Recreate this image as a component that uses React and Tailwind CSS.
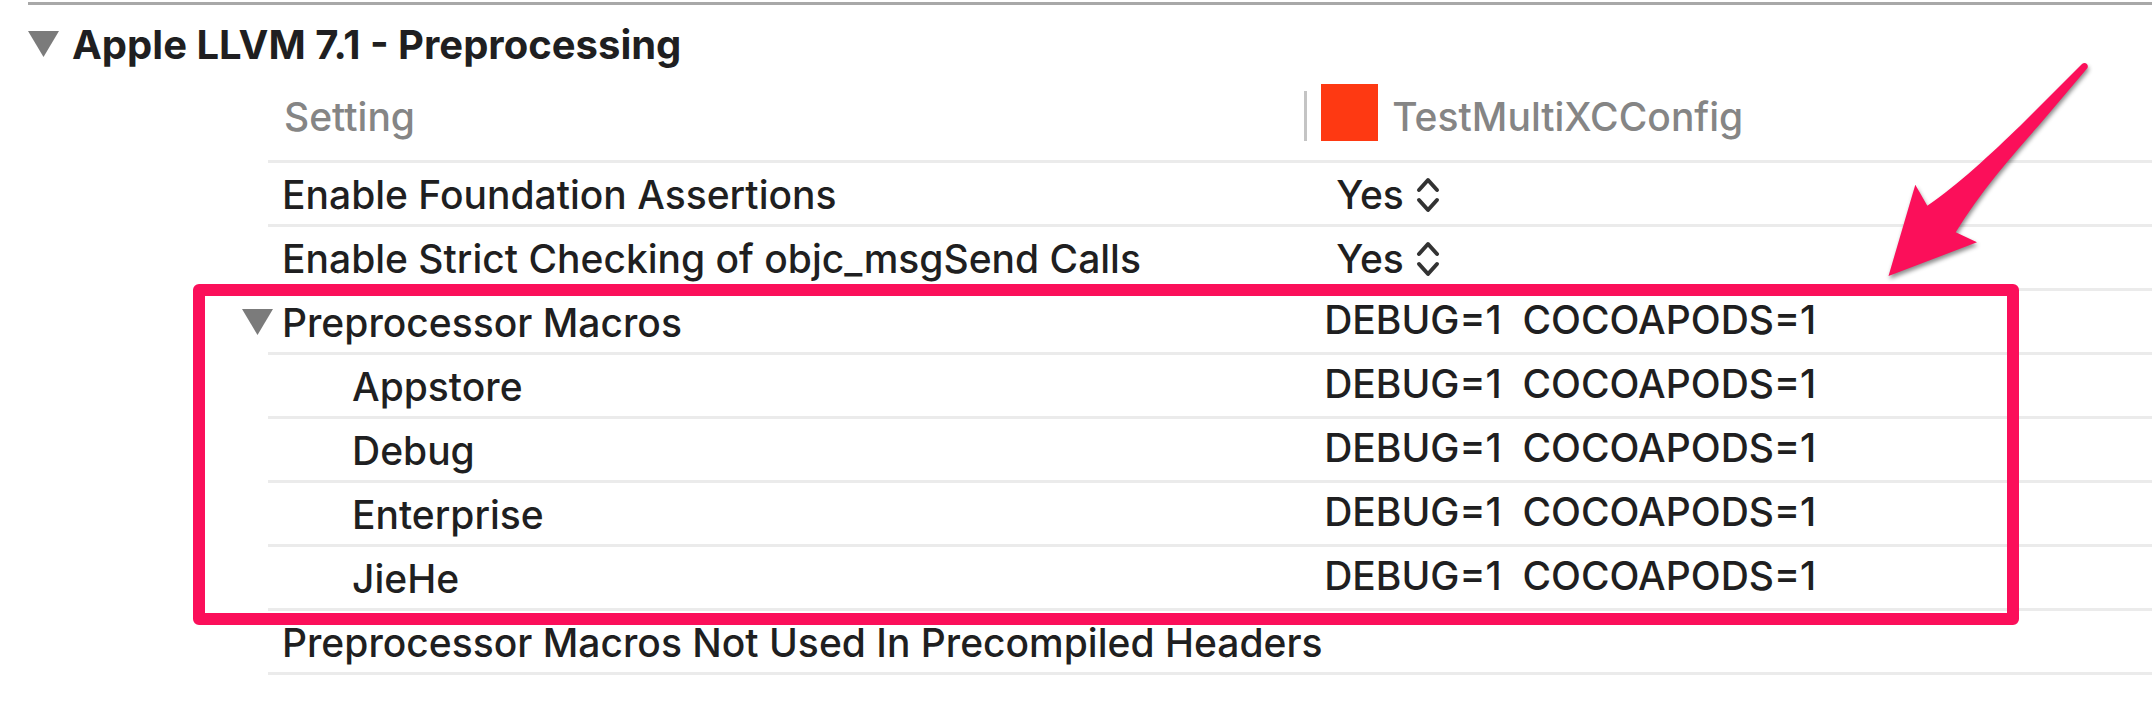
import { useState } from 'react'

const MACROS = 'DEBUG=1  COCOAPODS=1'

const configurations = ['Appstore', 'Debug', 'Enterprise', 'JieHe']

function Disclosure({ open, onClick, label }) {
  return (
    <button
      type="button"
      onClick={onClick}
      aria-expanded={open}
      aria-label={label}
      className="h-7 w-8 shrink-0 text-[#7b7b7b]"
    >
      <svg viewBox="0 0 32 28" fill="currentColor" className={open ? 'h-7 w-8' : 'h-7 w-8 -rotate-90'}>
        <path d="M0 0H31L15.5 26Z" />
      </svg>
    </button>
  )
}

function SelectRow({ id, label }) {
  const [value, setValue] = useState('Yes')

  return (
    <tr>
      <td className="h-16 border-b-3 border-[#ebebeb] pt-0.5 pl-3.5">
        <label htmlFor={id}>{label}</label>
      </td>
      <td className="h-16 border-b-3 border-[#ebebeb] pt-0.5 pl-8">
        <div className="flex items-center">
          <select
            id={id}
            value={value}
            onChange={(e) => setValue(e.target.value)}
            className="-mr-7 appearance-none bg-transparent pr-10 field-sizing-content"
          >
            <option>Yes</option>
            <option>No</option>
          </select>
          <svg
            viewBox="0 0 24 36"
            fill="none"
            stroke="#333333"
            strokeWidth="4"
            strokeLinecap="round"
            strokeLinejoin="round"
            className="pointer-events-none h-9 w-6"
          >
            <path d="M3 13L12 3L21 13" />
            <path d="M3 23L12 33L21 23" />
          </svg>
        </div>
      </td>
    </tr>
  )
}

function Arrow() {
  return (
    <svg
      viewBox="0 0 220 240"
      fill="#fb0f5a"
      className="pointer-events-none absolute top-[55px] right-[52px] h-[240px] w-[220px] drop-shadow-[1px_3px_2px_rgba(0,0,0,0.45)]"
    >
      <path d="M8.5 221L35.3 129.7L47.3 150.7C78 130 112 98 140 71L202 9C205 6.500 209 9 207.500 13L160 69C132 101 100 137 75.700 177.300L97 187.300Z" />
    </svg>
  )
}

function App() {
  const [sectionOpen, setSectionOpen] = useState(true)
  const [macrosOpen, setMacrosOpen] = useState(true)

  return (
    <div className="relative min-h-screen overflow-hidden bg-white pt-0.5 font-['Inter',sans-serif] text-[39px] leading-12 font-medium text-[#1f1f21]">
      {/* Section header */}
      <header className="ml-7 flex items-center gap-3 border-t-3 border-[#a8a8a8] pt-4">
        <Disclosure open={sectionOpen} onClick={() => setSectionOpen(!sectionOpen)} label="Preprocessing" />
        <h2 className="text-[40px] font-bold">Apple LLVM 7.1 - Preprocessing</h2>
      </header>

      {/* Build settings */}
      {sectionOpen && (
        <div className="pl-67">
          <table className="w-full table-fixed border-separate border-spacing-0 text-left">
            <thead className="text-[#858585]">
              <tr>
                <th className="h-[94px] w-[55%] border-b-3 border-[#ebebeb] pt-1 pl-4 font-medium">Setting</th>
                <th className="h-[94px] border-b-3 border-[#ebebeb] pb-1 font-medium">
                  <div className="flex items-end">
                    <span className="mr-3.5 h-[50px] w-[3px] bg-[#c4c4c4]" />
                    <span className="mr-3.5 size-[57px] bg-[#fe3912]" />
                    TestMultiXCConfig
                  </div>
                </th>
              </tr>
            </thead>
            <tbody>
              <SelectRow id="foundation-assertions" label="Enable Foundation Assertions" />
              <SelectRow id="strict-checking" label="Enable Strict Checking of objc_msgSend Calls" />
              <tr>
                <td className="h-16 border-b-3 border-[#ebebeb] pt-0.5 pl-3.5">
                  <div className="-ml-10 flex items-center gap-2">
                    <Disclosure open={macrosOpen} onClick={() => setMacrosOpen(!macrosOpen)} label="Macros" />
                    Preprocessor Macros
                  </div>
                </td>
                <td className="h-16 border-b-3 border-[#ebebeb] pb-1 pl-5 whitespace-pre">{MACROS}</td>
              </tr>
              {macrosOpen &&
                configurations.map((name) => (
                  <tr key={name}>
                    <td className="h-16 border-b-3 border-[#ebebeb] pt-0.5 pl-21">{name}</td>
                    <td className="h-16 border-b-3 border-[#ebebeb] pb-1 pl-5 whitespace-pre">{MACROS}</td>
                  </tr>
                ))}
              <tr>
                <td className="h-16 border-b-3 border-[#ebebeb] pt-0.5 pl-3.5 whitespace-nowrap">
                  Preprocessor Macros Not Used In Precompiled Headers
                </td>
                <td className="h-16 border-b-3 border-[#ebebeb]" />
              </tr>
            </tbody>
          </table>
        </div>
      )}

      {/* Callout over the macros rows */}
      <div className="pointer-events-none absolute top-[284px] right-[133px] left-[193px] h-[341px] rounded-md border-12 border-[#fb0f5a]" />
      <Arrow />
    </div>
  )
}

export default App
